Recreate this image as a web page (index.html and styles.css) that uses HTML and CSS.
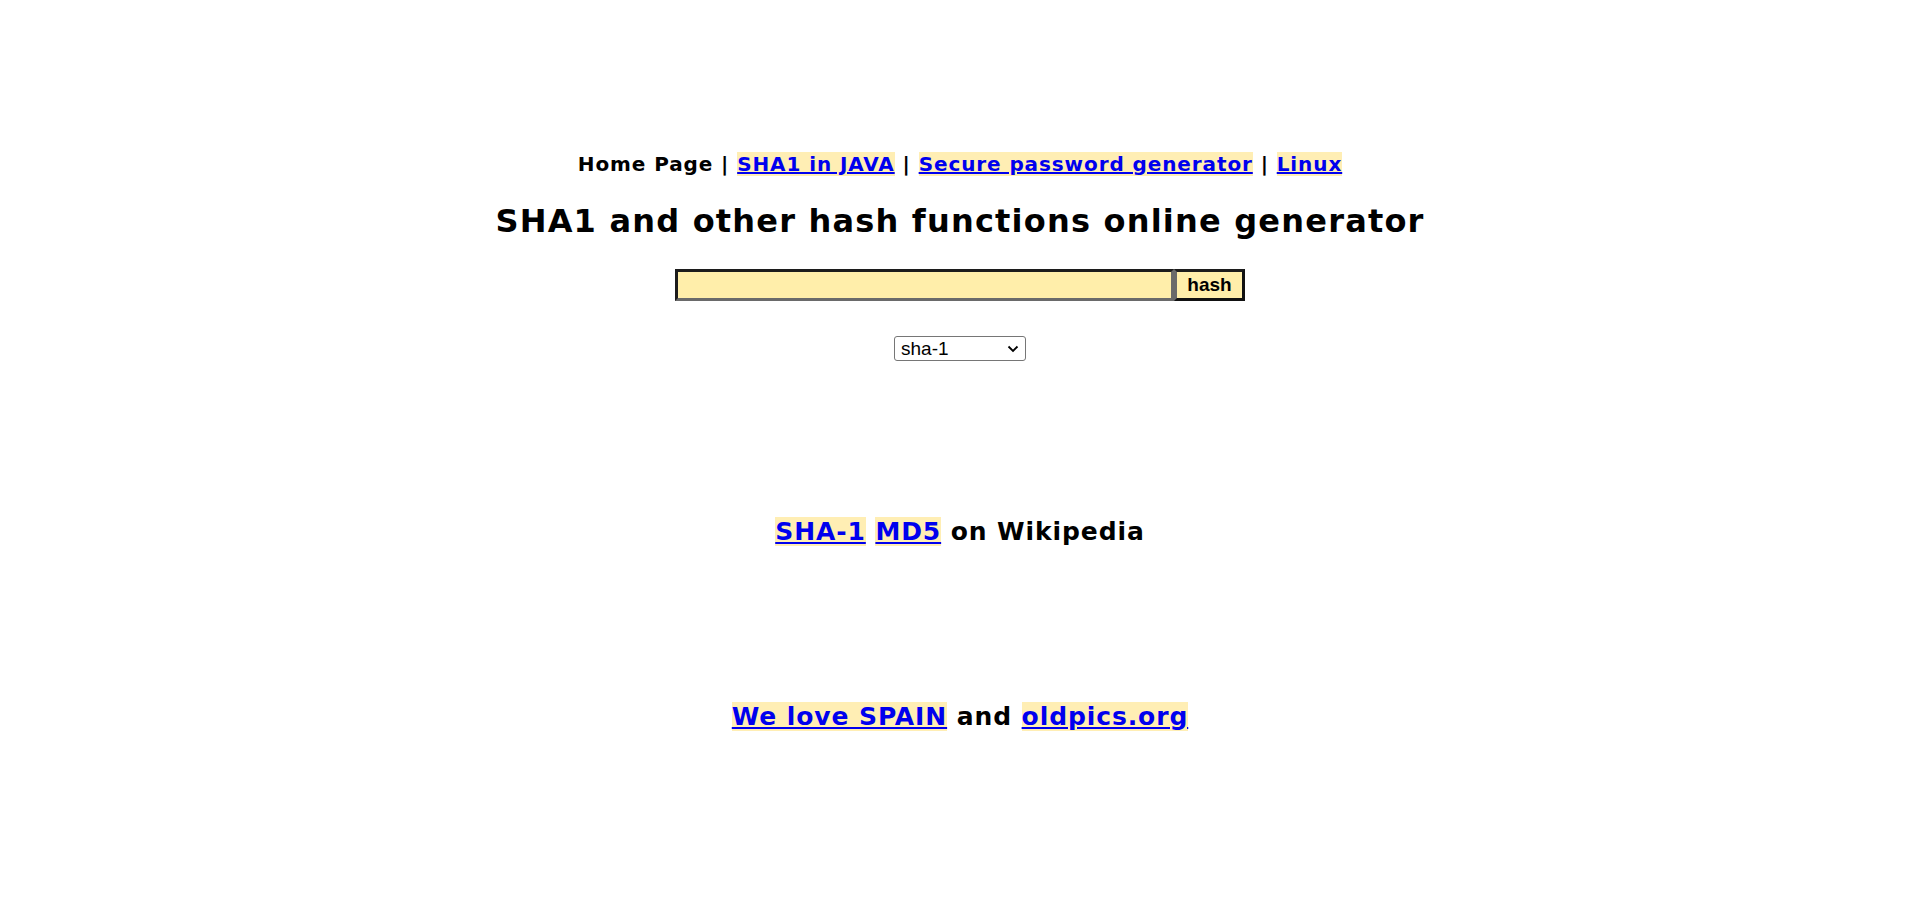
FILE: index.html
```html
<!DOCTYPE html>
<html>
<head>
<meta charset="utf-8">
<title>SHA1 online generator</title>
<link rel="stylesheet" href="styles.css">
</head>
<body>
<div class="page">
  <nav class="nav">Home Page | <a href="#">SHA1 in JAVA</a> | <a href="#">Secure password generator</a> | <a href="#">Linux</a></nav>
  <h1 class="title">SHA1 and other hash functions online generator</h1>
  <form class="form">
    <div class="row">
      <input class="text" type="text"><button class="btn" type="button">hash</button>
    </div>
    <span class="select-wrap">
      <select class="algo">
        <option>sha-1</option>
        <option>md5</option>
        <option>sha256</option>
      </select>
      <svg class="chev" width="12" height="8" viewBox="0 0 12 8"><path d="M1.5 1.5 L6 6 L10.5 1.5" fill="none" stroke="#000" stroke-width="1.8"/></svg>
    </span>
  </form>
  <p class="wiki"><a href="#">SHA-1</a> <a href="#">MD5</a> on Wikipedia</p>
  <p class="love"><a href="#">We love SPAIN</a> and <a href="#">oldpics.org</a></p>
</div>
</body>
</html>
```
FILE: styles.css
```css
html, body {
  margin: 0;
  padding: 0;
  background: #ffffff;
}
body {
  font-family: "DejaVu Sans", Verdana, sans-serif;
  font-weight: bold;
  color: #000;
}
.page {
  display: flex;
  flex-direction: column;
  align-items: center;
  padding-top: 151px;
}
a {
  color: #0000ee;
  background: #ffeeb4;
  text-decoration: underline;
}
.nav {
  font-size: 20px;
  letter-spacing: 0.9px;
  line-height: 26px;
}
.title {
  font-size: 32px;
  letter-spacing: 1.2px;
  line-height: 40px;
  margin: 24px 0 0 0;
}
.form {
  display: flex;
  flex-direction: column;
  align-items: center;
  margin-top: 28px;
}
.row {
  display: flex;
}
.text {
  width: 499px;
  height: 32px;
  box-sizing: border-box;
  background: #ffeeaa;
  border-width: 3px;
  border-style: solid;
  border-color: #1c1c1c #6a6a6a #6a6a6a #1c1c1c;
  padding: 0 4px;
  margin: 0;
}
.btn {
  width: 71px;
  height: 32px;
  box-sizing: border-box;
  background: #ffeeaa;
  border-width: 3px;
  border-style: solid;
  border-color: #1c1c1c #111 #111 #6a6a6a;
  font-family: "Liberation Sans", Arial, sans-serif;
  font-weight: bold;
  font-size: 19px;
  padding: 0;
  margin: 0;
  color: #000;
}
.select-wrap {
  position: relative;
  display: inline-block;
  margin-top: 35px;
  line-height: 0;
}
.algo {
  -webkit-appearance: none;
  appearance: none;
  width: 132px;
  height: 25px;
  box-sizing: border-box;
  padding: 0 0 0 6px;
  font-family: "Liberation Sans", Arial, sans-serif;
  font-size: 19px;
  font-weight: normal;
  background: #fff;
  border: 1px solid #767676;
  border-radius: 3px;
  color: #000;
  margin: 0;
}
.chev {
  position: absolute;
  right: 7px;
  top: 9px;
  pointer-events: none;
}
.wiki {
  font-size: 25px;
  letter-spacing: 0.9px;
  line-height: 30px;
  margin: 156px 0 0 0;
}
.love {
  font-size: 25px;
  letter-spacing: 0.9px;
  line-height: 30px;
  margin: 155px 0 0 0;
}
```
